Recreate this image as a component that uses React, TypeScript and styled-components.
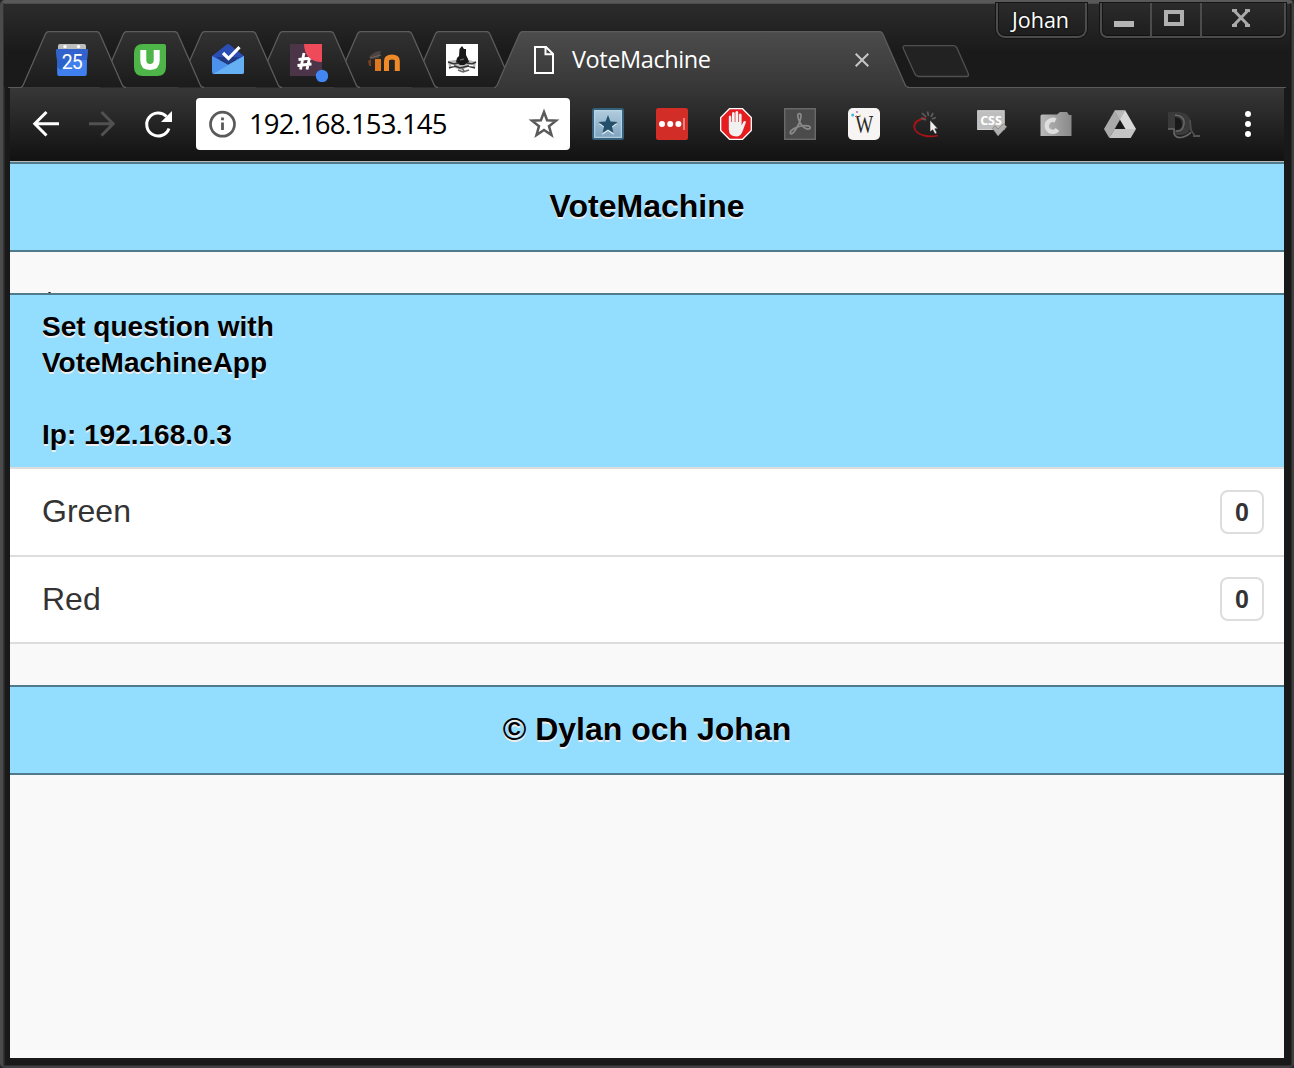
import React from 'react';
import styled, { createGlobalStyle, css } from 'styled-components';

const GlobalStyle = createGlobalStyle`
  * { box-sizing: border-box; }
  html, body { margin: 0; padding: 0; background: #20262c; overflow: hidden; }
  svg { display: block; flex: none; }
`;

const uiFont = '"Open Sans", "Noto Sans", sans-serif';
const pageFont = '"Liberation Sans", Arial, sans-serif';

const Window = styled.div`
  display: flex;
  flex-direction: column;
  width: 1294px;
  height: 1068px;
  border: solid #4b4b4b;
  border-width: 3px 2px 2px 3px;
  border-top-color: #595959;
  border-right-color: #3f3f3f;
  border-bottom-color: #434144;
  border-radius: 5px;
  background: #191919;
  box-shadow: inset 1px 0 #333, inset 2px 0 #2a2a2a, inset -1px 0 #292929, inset 0 -1px #2b2b2b;
`;

const TitleBar = styled.header`
  display: flex;
  align-items: flex-start;
  height: 84px;
  flex: none;
  margin: 0 2px 0 1px;
  border-top: 1px solid #4b4b4b;
  background: linear-gradient(#2c2c2c, #1a1a1a 48px, #1a1a1a);
`;

const TabStrip = styled.nav`
  display: flex;
  flex: none;
  margin-top: 27px;
  margin-left: 29px;
  height: 57px;
`;

const Tab = styled.div<{ $order: number; $active?: boolean }>`
  position: relative;
  z-index: ${(p) => p.$order};
  display: flex;
  align-items: center;
  justify-content: ${(p) => (p.$active ? 'flex-start' : 'center')};
  width: ${(p) => (p.$active ? 400 : 78)}px;
  height: 57px;
  padding-left: ${(p) => (p.$active ? 33 : 0)}px;
  font: 23.5px/30px ${uiFont};
  letter-spacing: -0.42px;
  color: #fff;
`;

const TabOutline = styled.svg<{ $offset: number }>`
  position: absolute;
  z-index: -1;
  top: 0;
  left: ${(p) => p.$offset}px;
`;

const TabIcon = styled.div`
  position: relative;
  height: 32px;
`;

const TabTitle = styled.span`
  width: 283px;
  margin-left: 18px;
  padding-bottom: 1px;
`;

const NewTab = styled.div`
  margin: 41px 0 0 1px;
`;

const Spacer = styled.div`
  flex: 1;
`;

const capButton = css`
  border: 2px solid #4c4c4c;
  border-top: 0;
  background: linear-gradient(#2b2b2b, #1e1e1e);
  box-shadow: inset 0 -1px #111, inset 1px 0 #151515, 0 0 0 1px #151515;
`;

const Profile = styled.div`
  ${capButton}
  width: 91px;
  height: 35px;
  margin: -1px 13px 0 0;
  padding-right: 2px;
  border-radius: 0 0 9px 9px;
  text-align: center;
  font: 21.5px/33px ${uiFont};
  color: #fff;
  text-shadow: 0 0 3px #000;
`;

const WindowControls = styled.div`
  ${capButton}
  display: flex;
  width: 186px;
  height: 35px;
  margin: -1px 4px 0 0;
  border-radius: 0 0 7px 7px;
`;

const Control = styled.div<{ $w: number }>`
  display: flex;
  justify-content: center;
  width: ${(p) => p.$w}px;
  padding: 4px 4px 0 0;
  border-right: 2px solid #4c4c4c;
  &:last-child { border-right: 0; }
`;

const Body = styled.div`
  display: flex;
  flex-direction: column;
  flex: 1;
  margin: 0 8px 8px 7px;
`;

const Toolbar = styled.div`
  display: flex;
  align-items: center;
  flex: none;
  height: 73px;
  padding: 0 20px 1px 20px;
  background: linear-gradient(#373737, #111);
`;

const NavButtons = styled.div`
  display: flex;
  gap: 24px;
  margin-right: 22px;
`;

const AddressBar = styled.div`
  display: flex;
  align-items: center;
  width: 374px;
  height: 52px;
  padding: 0 10px 0 11px;
  border-radius: 4px;
  background: #fff;
  font: 27.5px/52px ${uiFont};
  letter-spacing: -0.85px;
  color: #000;
`;

const Address = styled.span`
  flex: 1;
  margin-left: 12px;
`;

const Extensions = styled.div`
  display: flex;
  gap: 32px;
  margin-left: 22px;
`;

const Page = styled.main`
  flex: 1;
  border-top: 1px solid #b8babb;
  background: #f9f9f9;
  font-family: ${pageFont};
  color: #333;
`;

const Banner = styled.div`
  height: 90px;
  border: solid #4f7b8d;
  border-width: 2px 0;
  background: #93ddff;
  text-align: center;
  font-size: 32px;
  font-weight: bold;
  line-height: 84px;
  color: #000;
  text-shadow: 0 2px 0 #eee;
`;

const Clipped = styled.div`
  display: flex;
  align-items: flex-end;
  height: 41px;
  padding-left: 38px;
`;

const Speck = styled.i`
  width: 3px;
  height: 1px;
  background: linear-gradient(90deg, #d79a57, #222 50%, #5a9ccc);
`;

const Divider = styled.div`
  height: 176px;
  padding: 14px 32px 0;
  border-top: 2px solid #4f7b8d;
  border-bottom: 2px solid #ddd;
  background: #93ddff;
  font-size: 28px;
  font-weight: bold;
  line-height: 36px;
  color: #000;
  text-shadow: 0 2px 0 #eee;
`;

const Row = styled.div<{ $h: number }>`
  display: flex;
  align-items: flex-start;
  justify-content: space-between;
  height: ${(p) => p.$h}px;
  padding: 0 20px 0 32px;
  border-bottom: 2px solid #ddd;
  background: #fff;
  font-size: 32px;
  line-height: 84px;
`;

const Label = styled.span``;

const Count = styled.span<{ $top: number }>`
  width: 44px;
  height: 44px;
  margin-top: ${(p) => p.$top}px;
  border: 2px solid #ddd;
  border-radius: 8px;
  text-align: center;
  font-size: 25px;
  font-weight: bold;
  line-height: 41px;
`;

const FooterGap = styled.div`
  height: 41px;
`;

const OutlineShape = ({ id, w, active }: { id: string; w: number; active?: boolean }) => {
  const d = `M0.5 56.5 Q2 56.5 3.2 54 L25.3 3.2 Q26.5 0.5 29 0.5 H${w - 28} Q${w - 25} 0.5 ${w - 24} 3.2 L${w - 2} 53.5 Q${w - 1} 56.5 ${w + 2} 56.5`;
  return (
    <TabOutline $offset={active ? -7 : -13} width={w + 4} height={57}>
      <defs>
        <linearGradient id={id} x1="0" y1="0" x2="0" y2="1">
          <stop offset="0" stopColor={active ? '#4c4c4c' : '#323232'} />
          <stop offset="1" stopColor={active ? '#373737' : '#1b1b1b'} />
        </linearGradient>
      </defs>
      <path d={d} fill={`url(#${id})`} stroke="#5c5c5c" strokeWidth="1.3" />
      {active && <path d={`M2 56.5H${w}`} stroke="#373737" strokeWidth="1.5" />}
    </TabOutline>
  );
};

const BaseLine = styled.div`
  display: flex;
  height: 1px;
  flex: none;
  background: #5a5a5a;
  margin: 0 6px 0 5px;
`;

const ActiveSeam = styled.i`
  width: 409px;
  margin-left: 489px;
  background: #373737;
`;

const CalendarIcon = () => (
  <svg width="32" height="32" viewBox="0 0 32 32">
    <path d="M2 6V2Q2 0 4 0H28Q30 0 30 2V6Z" fill="#bdbdbd" />
    <circle cx="9" cy="2.6" r="1.7" fill="#fff" /><circle cx="22.5" cy="2.6" r="1.7" fill="#fff" />
    <path d="M1.5 5H30.5Q32 5 31.7 7L31 16 30.8 30Q30.8 32 29 32H3Q1.2 32 1.2 30L1 16 .2 7Q0 5 1.5 5Z" fill="#3f80ee" />
    <path d="M1.5 5H30.5Q32 5 31.7 7L31 16H1L.2 7Q0 5 1.5 5Z" fill="#3162cd" />
    <path d="M1 16H14L5 26 1 23Z" fill="#2b62c9" />
    <text x="15.7" y="25.3" textAnchor="middle" fontFamily="Roboto, sans-serif" fontSize="19.5" letterSpacing="-1" fill="#fff">25</text>
  </svg>
);
const UdemyIcon = () => (
  <svg width="32" height="32" viewBox="0 0 32 32">
    <path d="M9 0H30Q32 0 32 2V23Q32 32 23 32H9Q0 32 0 23V9Q0 0 9 0Z" fill="#4eb648" />
    <path d="M9.3 6V16.3Q9.3 23 16 23T22.7 16.3V6" fill="none" stroke="#fff" strokeWidth="6" />
  </svg>
);
const InboxIcon = () => (
  <svg width="32" height="32" viewBox="0 0 32 32">
    <path d="M0 12L14 1Q16 -.8 18 1L32 12V16H0Z" fill="#2a4eb4" />
    <path d="M0 12L16 20.5 32 12V28Q32 30 30 30H2Q0 30 0 28Z" fill="#4d91ee" />
    <path d="M32 12V28Q32 30 30 30H1Z" fill="#65b0f2" />
    <path d="M4 13H28L16 20.5Z" fill="#203a87" />
    <path d="M11 9L16.5 14.5 27.5 3.2" fill="none" stroke="#fff" strokeWidth="3.2" />
  </svg>
);
const SlackIcon = () => (
  <svg width="38" height="38" viewBox="0 0 38 38" style={{ marginRight: -6 }}>
    <rect width="32" height="32" fill="#4c3549" />
    <g fill="none" stroke="#fff" strokeWidth="2.8"><path d="M14 9L10.5 25.5M20 11L17 25.5M8.5 15.5L21.5 14M7.5 21.5L21.5 20" /></g>
    <path d="M14 0H32V18Q23 18 18 12.5Q14 7 14 0Z" fill="#ee4a59" />
    <circle cx="32" cy="32" r="6.2" fill="#4285f4" />
  </svg>
);
const MoodleIcon = () => (
  <svg width="32" height="32" viewBox="0 0 32 32">
    <path d="M18.5 27V17Q18.5 13 24 13T29.3 17V27" fill="none" stroke="#ee8a28" strokeWidth="5" />
    <path d="M7 15H13V27H7Z" fill="#e0771f" />
    <path d="M0 17L3 15V22H1Z" fill="#774020" />
    <path d="M1 13Q6 7 13 7L11 14 3 15Z" fill="#4b4442" />
    <path d="M2 14L13 11" stroke="#75655f" />
  </svg>
);
const HatIcon = () => (
  <svg width="32" height="32" viewBox="0 0 32 32">
    <rect width="32" height="32" fill="#fff" />
    <path d="M2 17L9 16H23L30 18 29 24 22 23 16 26 9 24 3 23Z" fill="#b9b9b9" />
    <path d="M13.5 5L16 2 18 5H20V11L22 15 23 18 18 21H14L10 18 11 14 13 12Z" fill="#191919" />
    <path d="M2 18L8 20 12 19M21 19L26 20 30 18M3 24L9 22 14 24 22 22 29 24" fill="none" stroke="#333" strokeWidth="1.6" />
    <path d="M12 26L17 28 23 26M16 24L18 27" fill="none" stroke="#666" strokeWidth="1.6" />
    <path d="M5 21.5H8M23 21.5H27" stroke="#fff" strokeWidth="1.5" />
    <path d="M14 16L18 15" stroke="#777" strokeWidth="1.2" />
  </svg>
);
const PageIcon = () => (
  <svg width="20" height="28" viewBox="0 0 20 28" fill="none" stroke="#fff" strokeWidth="2">
    <path d="M1 1H12L19 8V27H1Z" /><path d="M11.5 1V8.3H19" />
  </svg>
);
const CloseIcon = () => (
  <svg width="14" height="14" viewBox="0 0 14 14" stroke="#c6c6c6" strokeWidth="2"><path d="M.7 .7L13.3 13.3M13.3 .7L.7 13.3" /></svg>
);
const BackIcon = ({ flip }: { flip?: boolean }) => (
  <svg width="32" height="32" viewBox="0 0 32 32" fill="none" stroke={flip ? '#515151' : '#fff'} strokeWidth="3">
    <g transform={flip ? 'translate(32 0) scale(-1 1)' : undefined}><path d="M29 15.7H5M16.5 4L4.8 15.7 16.5 27.5" /></g>
  </svg>
);
const ReloadIcon = () => (
  <svg width="32" height="32" viewBox="0 0 32 32">
    <path d="M27 20.5A11.5 11.5 0 1 1 24.5 8.5" fill="none" stroke="#fff" strokeWidth="3" />
    <path d="M30 3V14H19Z" fill="#fff" />
  </svg>
);
const InfoIcon = () => (
  <svg width="30" height="30" viewBox="0 0 30 30">
    <circle cx="15.5" cy="15.2" r="12" fill="none" stroke="#5a5a5a" strokeWidth="2.7" />
    <path d="M15.5 13.5V21M15.5 8.5V11.3" stroke="#5a5a5a" strokeWidth="2.8" />
  </svg>
);
const StarIcon = () => (
  <svg width="32" height="32" viewBox="0 0 32 32">
    <path d="M16 4L19.1 12.3 28 12.7 21 18.2 23.5 27 16 22 8.5 27 11 18.2 4 12.7 12.9 12.3Z" fill="none" stroke="#5a5a5a" strokeWidth="2.5" />
  </svg>
);
const BookmarkExt = () => (
  <svg width="32" height="32" viewBox="0 0 32 32">
    <defs><linearGradient id="bm" x1="0" y1="0" x2="0" y2="1"><stop stopColor="#b3cfdf" /><stop offset="1" stopColor="#7ca2bd" /></linearGradient></defs>
    <rect x="1" y="1" width="30" height="30" rx="1.5" fill="url(#bm)" stroke="#35617d" strokeWidth="2" />
    <rect x="2.7" y="2.7" width="26.6" height="26.6" fill="none" stroke="#bed7e5" strokeWidth="1" />
    <path d="M16 10L18.3 16H25L19.7 20 22 27 16 23 10 27 12.3 20 7 16H13.7Z" fill="#dcecf5" />
    <path d="M16 7L18.5 13.5 25.5 14 20 18.5 21.5 25 16 21.5 10.5 25 12 18.5 6.5 14 13.5 13.5Z" fill="#24506b" />
  </svg>
);
const PassExt = () => (
  <svg width="32" height="32" viewBox="0 0 32 32">
    <rect width="32" height="32" rx="2.5" fill="#d32d27" />
    <g fill="#fff"><circle cx="6" cy="16" r="3" /><circle cx="14.2" cy="16" r="3" /><circle cx="22.4" cy="16" r="3" /></g>
    <path d="M28 10V22" stroke="#f0a8a5" strokeWidth="1.4" />
  </svg>
);
const BlockExt = () => (
  <svg width="32" height="32" viewBox="0 0 32 32">
    <path d="M9.5 .7H22.5L31.3 9.5V22.5L22.5 31.3H9.5L.7 22.5V9.5Z" fill="#e51c20" stroke="#fff" strokeWidth="1.3" />
    <path d="M8.8 8.5Q10 6.5 11.3 8.5V14H12V5Q13.3 3 14.7 5V14H15.4V4Q17 2 18.2 4V14H18.9V6.5Q20.2 4.5 21.6 6.5V17.5L23.5 13.5Q25.5 12.5 26 14L22.5 23.5Q20.5 28.5 16.5 28.5Q9 28.5 8.8 21.5Z" fill="#f1f1f1" />
  </svg>
);
const AcrobatExt = () => (
  <svg width="32" height="32" viewBox="0 0 32 32">
    <rect x=".7" y=".7" width="30.6" height="30.6" fill="#4b4b4b" stroke="#696969" strokeWidth="1.4" />
    <path d="M15.5 5.5C12.5 5.5 14 11 16.5 15.5C19 20 23.5 22 26 20.5C27.5 18 22 17 17 18C11 19.3 6 22.5 6.2 25C8.5 28.5 13 19.5 15 15.5C17 11 18 5.5 15.5 5.5Z" fill="none" stroke="#8a8a8a" strokeWidth="1.7" />
  </svg>
);
const WExt = () => (
  <svg width="32" height="32" viewBox="0 0 32 32">
    <rect width="32" height="32" rx="5" fill="#f6f5f3" />
    <text x="16.3" y="24.5" textAnchor="middle" fontFamily="Liberation Serif, serif" fontSize="25" textLength="18" lengthAdjust="spacingAndGlyphs" fill="#292929">W</text>
    <circle cx="4.7" cy="7" r="1.5" fill="#42b6e6" /><circle cx="9" cy="4" r="1.1" fill="#c86bc4" /><circle cx="12.2" cy="7.5" r=".9" fill="#e6b940" /><circle cx="8.4" cy="8.2" r=".8" fill="#df5966" />
  </svg>
);
const ClickExt = () => (
  <svg width="32" height="32" viewBox="0 0 32 32" fill="none">
    <path d="M14 10Q2 12 2.2 19Q3 26 14 28Q20 29 26 27.5" stroke="#a71317" strokeWidth="1.8" />
    <path d="M9 10L14 12M10 5L14 9M15.5 3.5L16.5 8M21 5L19 9M24 9.5L20 11" stroke="#5c5c5c" strokeWidth="1.7" />
    <path d="M18 12V24L20.7 21.8 23 26 25 25 22.8 20.8H26Z" fill="#eee" stroke="#222" strokeWidth=".6" />
  </svg>
);
const CssExt = () => (
  <svg width="32" height="32" viewBox="0 0 32 32">
    <rect x="1.7" y="2.7" width="26.5" height="18.8" fill="#bebebe" stroke="#d4d4d4" strokeWidth="1" />
    <text x="15" y="16.8" textAnchor="middle" fontFamily="Open Sans, sans-serif" fontWeight="bold" fontSize="12.5" fill="#fff">CSS</text>
    <path d="M16.5 20.5L19 17.8 22 21 27.5 15.8 30.8 18.8 22 28Z" fill="#b0b0b0" stroke="#777" strokeWidth=".6" />
  </svg>
);
const FolderExt = () => (
  <svg width="32" height="32" viewBox="0 0 32 32">
    <defs><linearGradient id="fd"><stop stopColor="#b9b9b9" /><stop offset="1" stopColor="#898989" /></linearGradient></defs>
    <path d="M.5 8Q.5 6.5 2 6.5H17L20 4H27L29 7H31.5V28H.5Z" fill="url(#fd)" />
    <path d="M15.5 12.5A6 6 0 1 0 17.5 21.5" fill="none" stroke="#dedede" strokeWidth="4.5" />
  </svg>
);
const DriveExt = () => (
  <svg width="32" height="32" viewBox="0 0 32 32">
    <path d="M10.7 2.5L0 21 5.3 30 16 11.7Z" fill="#aaa" /><path d="M10.7 2.5H21.3L32 21H21.5L16 11.7Z" fill="#d8d8d8" /><path d="M10.5 21H32L26.7 30H5.3Z" fill="#c4c4c4" />
    <path d="M10.7 2.5H21.3L16 11.7Z" fill="#b9b9b9" />
    <path d="M16 12.5L20.3 20.4H11.7Z" fill="#191919" />
  </svg>
);
const DlExt = () => (
  <svg width="32" height="32" viewBox="0 0 32 32" fill="none">
    <path d="M0 4H11Q23 5 23 16Q23 26 14 27H6V21H0Z" fill="#3a3a3a" />
    <path d="M7 9V22Q14 22 14 16T7 9Z" fill="#191919" />
    <path d="M7 7Q17 8 16 16T8 23M0 21H6V26Q9 31 15 29T23 24M25 28H32" stroke="#686868" strokeWidth="1.5" />
    <path d="M22 12L23 22 27 28" stroke="#4c4c4c" strokeWidth="1.8" />
  </svg>
);
const MenuIcon = () => (
  <svg width="32" height="32" viewBox="0 0 32 32" fill="#fff"><circle cx="16" cy="6" r="3" /><circle cx="16" cy="16" r="3" /><circle cx="16" cy="26" r="3" /></svg>
);

const tabIcons = [CalendarIcon, UdemyIcon, InboxIcon, SlackIcon, MoodleIcon, HatIcon];
const extensions = [BookmarkExt, PassExt, BlockExt, AcrobatExt, WExt, ClickExt, CssExt, FolderExt, DriveExt, DlExt, MenuIcon];

export default function App() {
  return (
    <>
      <GlobalStyle />
      <Window>
        <TitleBar>
          <TabStrip>
            {tabIcons.map((Icon, i) => (
              <Tab key={i} $order={10 - i}>
                <OutlineShape id={`tab${i}`} w={104} />
                <TabIcon><Icon /></TabIcon>
              </Tab>
            ))}
            <Tab $order={11} $active>
              <OutlineShape id="tabActive" w={413} active />
              <PageIcon />
              <TabTitle>VoteMachine</TabTitle>
              <CloseIcon />
            </Tab>
          </TabStrip>
          <NewTab>
            <svg width="68" height="33" viewBox="0 0 68 33">
              <path d="M3.5 .7H51Q54 .7 55.2 3.5L66 28Q67.5 31.5 64.5 31.5H17Q14 31.5 12.7 28.5L1.5 4Q0 .7 3.5 .7Z" fill="#222" stroke="#505050" strokeWidth="1.3" />
            </svg>
          </NewTab>
          <Spacer />
          <Profile>Johan</Profile>
          <WindowControls>
            <Control $w={50}><svg width="20" height="26"><rect y="14" width="20" height="6" fill="#b5b5b5" /></svg></Control>
            <Control $w={50}><svg width="20" height="26"><rect x="2" y="5" width="16" height="12" fill="none" stroke="#b0b0b0" strokeWidth="4" /></svg></Control>
            <Control $w={82}><svg width="20" height="26"><path d="M3 3.5L17 18M17 3.5L3 18M1 3.5H6M14 3.5H19M1 18.5H6M14 18.5H19" stroke="#aaa" strokeWidth="3" /></svg></Control>
          </WindowControls>
        </TitleBar>
        <BaseLine><ActiveSeam /></BaseLine>
        <Body>
          <Toolbar>
            <NavButtons><BackIcon /><BackIcon flip /><ReloadIcon /></NavButtons>
            <AddressBar><InfoIcon /><Address>192.168.153.145</Address><StarIcon /></AddressBar>
            <Extensions>{extensions.map((Icon, i) => <Icon key={i} />)}</Extensions>
          </Toolbar>
          <Page>
            <Banner>VoteMachine</Banner>
            <Clipped><Speck /></Clipped>
            <Divider>Set question with<br />VoteMachineApp<br /><br />Ip: 192.168.0.3</Divider>
            <Row $h={88}><Label>Green</Label><Count $top={21}>0</Count></Row>
            <Row $h={87}><Label>Red</Label><Count $top={20}>0</Count></Row>
            <FooterGap />
            <Banner>© Dylan och Johan</Banner>
          </Page>
        </Body>
      </Window>
    </>
  );
}
